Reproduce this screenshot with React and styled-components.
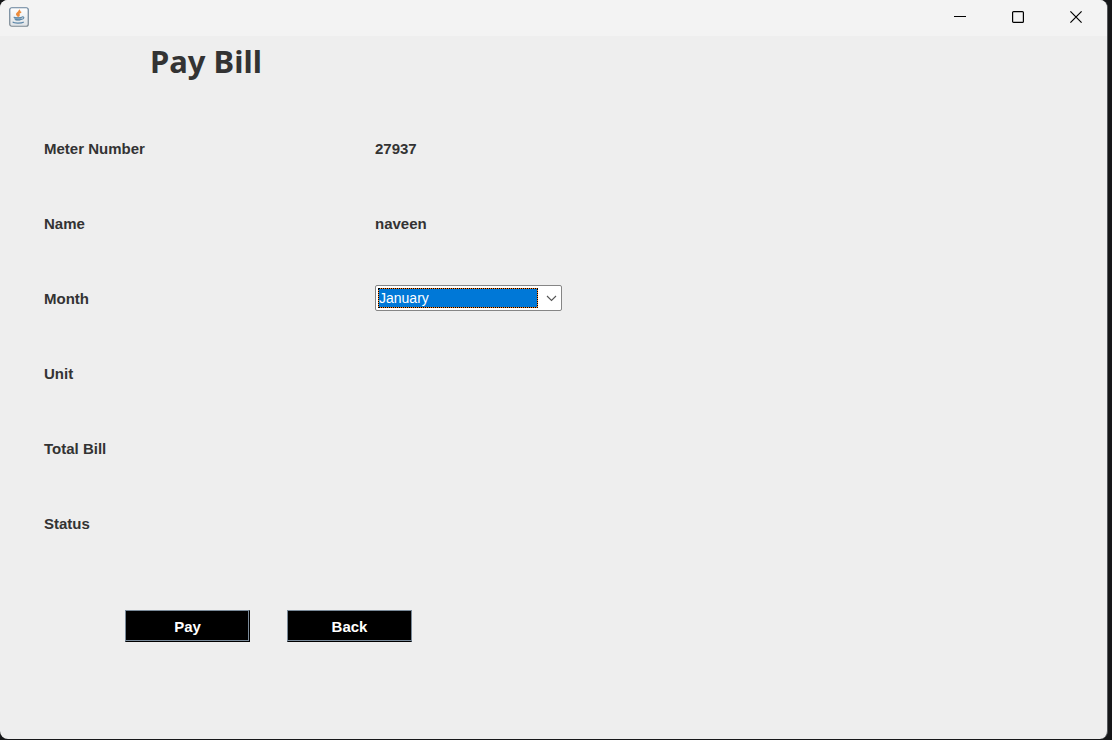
import React, { useState } from "react";
import styled, { createGlobalStyle } from "styled-components";

const GlobalStyle = createGlobalStyle`
  * { box-sizing: border-box; }
  body {
    margin: 0;
    background: #161719;
    color: #333;
    font-family: "Liberation Sans", Arial, sans-serif;
  }
`;

const Desktop = styled.div`
  display: flex;
  min-height: 100vh;
  padding: 0 4px 1px 0;
`;

const Window = styled.div`
  flex: 1;
  display: flex;
  flex-direction: column;
  background: #eee;
  border-right: 1px solid #55585c;
  border-radius: 8px;
  overflow: hidden;
`;

const TitleBar = styled.header`
  display: flex;
  align-items: center;
  justify-content: space-between;
  height: 36px;
  padding: 0 2px 0 9px;
  background: #f3f3f3;
`;

const AppIcon = styled.svg`
  display: block;
  width: 20px;
  height: 20px;
  margin-bottom: 2px;
`;

const Controls = styled.div`
  display: flex;
`;

const ControlButton = styled.button`
  display: grid;
  place-items: center;
  width: 58px;
  height: 34px;
  margin-bottom: 2px;
  padding: 0;
  border: 0;
  background: transparent;
  color: #000;

  svg { display: block; }
  &:hover { background: #e2e2e2; }
`;

const Form = styled.form`
  display: flex;
  flex-direction: column;
  padding: 8px 44px 40px;
`;

const Title = styled.h1`
  margin: 0 0 54px;
  padding-left: 106px;
  font: bold 31px/34px "Noto Sans", Tahoma, sans-serif;
`;

const Row = styled.div`
  display: grid;
  grid-template-columns: 331px minmax(0, 187px);
  align-items: center;
  height: 34px;
  margin-bottom: 41px;
  font-size: 15px;
  font-weight: bold;
  line-height: 20px;
`;

const SelectBox = styled.div`
  position: relative;
  height: 26px;
  margin-bottom: 2px;
  padding: 2px 23px 2px 2px;
  border: 1px solid #858585;
  border-radius: 2px;
  background: #fff;
`;

const Select = styled.select`
  display: block;
  width: 100%;
  height: 20px;
  padding: 0 0 1px 0;
  border: 1px solid #ff8728;
  border-radius: 0;
  outline: 1px dotted #000;
  outline-offset: -1px;
  appearance: none;
  background: #0078d7;
  background-clip: padding-box;
  color: #fff;
  font: 14px/18px "Liberation Sans", Arial, sans-serif;
`;

const Chevron = styled.svg`
  position: absolute;
  top: 9px;
  right: 4px;
  pointer-events: none;
`;

const Actions = styled.div`
  display: flex;
  gap: 37px;
  padding: 28px 0 0 81px;
`;

const ActionButton = styled.button`
  width: 125px;
  height: 32px;
  padding: 2px 0 0;
  border: 1px solid #7a8a99;
  border-bottom-color: #000;
  border-right-color: ${(p) => (p.$default ? "#000" : "#7a8a99")};
  box-shadow: inset ${(p) => (p.$default ? "-1px" : "0")} -1px #7a8a99;
  background: #000;
  color: #fff;
  font: bold 15px/20px "Liberation Sans", Arial, sans-serif;
`;

const MONTHS = [
  "January", "February", "March", "April", "May", "June", "July",
  "August", "September", "October", "November", "December",
];

function JavaIcon() {
  return (
    <AppIcon viewBox="0 0 20 20" aria-hidden="true">
      <defs>
        <linearGradient id="frame" x1="0" y1="0" x2="0" y2="1">
          <stop offset="0" stopColor="#64809a" />
          <stop offset="1" stopColor="#7c8891" />
        </linearGradient>
        <linearGradient id="face" x1="0" y1="0" x2="0" y2="1">
          <stop offset="0" stopColor="#fff" />
          <stop offset="1" stopColor="#dfe3e6" />
        </linearGradient>
      </defs>
      <rect x=".75" y=".75" width="18.5" height="18.5" rx="2" fill="url(#face)" stroke="url(#frame)" strokeWidth="1.2" />
      <path d="M10.4 3.4c.8 1.6-3 2.2-2.6 3.9.2.7.8 1.1 1.2 1.5M11.5 5.2c-2 .7-2.5 1.4-1.7 2.1.5.5.3 1-.2 1.5" fill="none" stroke="#ed8b3b" strokeWidth="1.7" strokeLinecap="round" />
      <path d="M5 10.2h7.8c0 2.2-1 3.6-2.4 3.6H7.6C6 13.8 5 12.4 5 10.2z" fill="#8fabc0" />
      <path d="M5 10.2c2.2.6 5.6.6 7.8 0M6.6 12.4c1.7.5 3.5.5 5 0M12.9 10c2.8-.6 2.5 2-.7 2.5M4 15.2c1 1.3 8.7 1.2 10.4 0" fill="none" stroke="#5b86a8" strokeWidth="1.1" strokeLinecap="round" />
    </AppIcon>
  );
}

export default function App() {
  const [month, setMonth] = useState("January");

  return (
    <>
      <GlobalStyle />
      <Desktop>
        <Window>
          <TitleBar>
            <JavaIcon />
            <Controls>
              <ControlButton type="button" aria-label="Minimize">
                <svg width="12" height="12"><path d="M0 5.5h12" stroke="currentColor" /></svg>
              </ControlButton>
              <ControlButton type="button" aria-label="Maximize">
                <svg width="12" height="12"><rect x=".6" y=".6" width="10.8" height="10.8" rx="1" fill="none" stroke="currentColor" strokeWidth="1.2" /></svg>
              </ControlButton>
              <ControlButton type="button" aria-label="Close">
                <svg width="12" height="12"><path d="M.4.4l11.2 11.2M11.6.4L.4 11.6" stroke="currentColor" strokeWidth="1.2" /></svg>
              </ControlButton>
            </Controls>
          </TitleBar>
          <Form onSubmit={(e) => e.preventDefault()}>
            <Title>Pay Bill</Title>
            <Row><span>Meter Number</span><span>27937</span></Row>
            <Row><span>Name</span><span>naveen</span></Row>
            <Row>
              <label htmlFor="month">Month</label>
              <SelectBox>
                <Select id="month" value={month} onChange={(e) => setMonth(e.target.value)}>
                  {MONTHS.map((m) => <option key={m}>{m}</option>)}
                </Select>
                <Chevron width="11" height="7" aria-hidden="true">
                  <path d="M1 1l4.5 4.5L10 1" fill="none" stroke="#555" strokeWidth="1.1" />
                </Chevron>
              </SelectBox>
            </Row>
            <Row><span>Unit</span></Row>
            <Row><span>Total Bill</span></Row>
            <Row><span>Status</span></Row>
            <Actions>
              <ActionButton type="submit" $default>Pay</ActionButton>
              <ActionButton type="button">Back</ActionButton>
            </Actions>
          </Form>
        </Window>
      </Desktop>
    </>
  );
}
